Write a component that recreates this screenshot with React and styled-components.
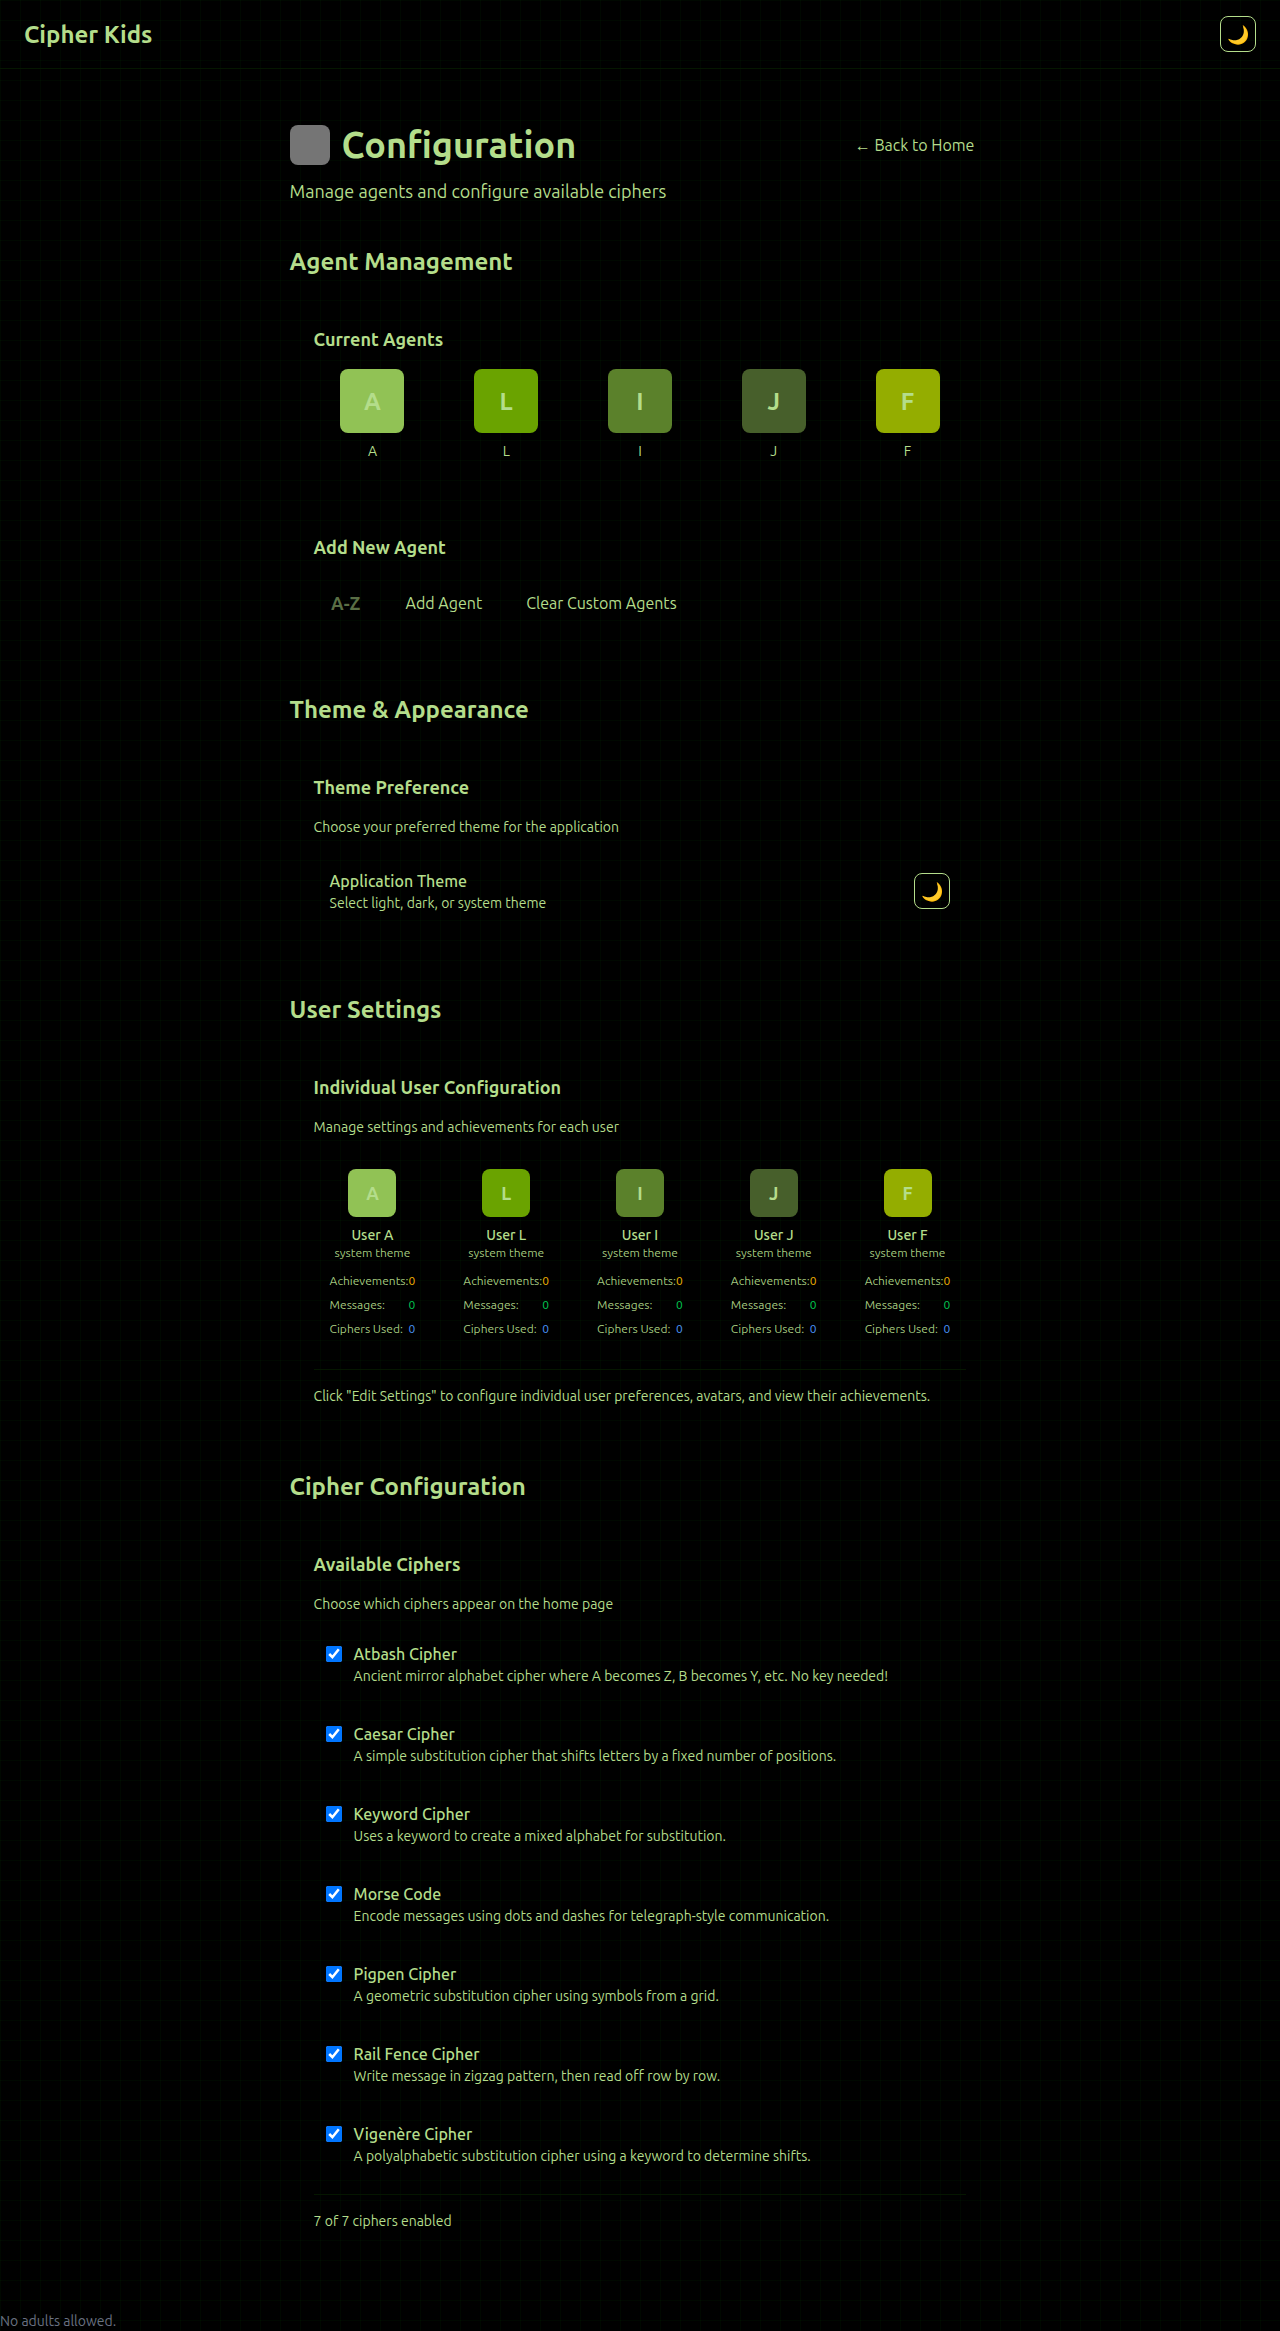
import React from "react";
import styled, { createGlobalStyle } from "styled-components";

const ink = "#b4dd8b";
const soft = "rgba(180, 221, 139, 0.92)";
const rule = "#051600";
const family = `Ubuntu, "Noto Sans", sans-serif`;

const Global = createGlobalStyle`
  *, *::before, *::after { box-sizing: border-box; }
  body {
    margin: 0;
    color: ${ink};
    font-family: ${family};
    font-size: 16px;
    line-height: 24px;
    background-color: #000;
    background-image:
      linear-gradient(rgba(0, 255, 0, 0.03) 1px, transparent 1px),
      linear-gradient(90deg, rgba(0, 255, 0, 0.03) 1px, transparent 1px);
    background-size: 20px 20px;
  }
  h1, h2, h3, p { margin: 0; }
`;

const Page = styled.div`
  min-height: 2331px;
  display: flex;
  flex-direction: column;
`;

const Header = styled.header`
  height: 69px;
  padding: 0 24px;
  display: flex;
  align-items: center;
  justify-content: space-between;
  border-bottom: 1px solid ${rule};
`;

const Brand = styled.div`
  margin-top: 1px;
  font-size: 24px;
  line-height: 33px;
  font-weight: 700;
`;

const ThemeButton = styled.button`
  width: 36px;
  height: 36px;
  padding: 0;
  display: flex;
  align-items: center;
  justify-content: center;
  border: 1px solid ${ink};
  border-radius: 8px;
  background: transparent;
  font-family: inherit;
  font-size: 18px;
  line-height: 28px;
`;

const Main = styled.main`
  width: 700.8px;
  margin: 56px auto 0;
  flex: 1;
`;

const TitleRow = styled.div`
  display: flex;
  align-items: center;
  justify-content: space-between;
  height: 40px;
  padding-right: 16px;
`;

const Title = styled.h1`
  display: flex;
  align-items: center;
  gap: 12px;
  font-size: 36px;
  line-height: 40px;
  font-weight: 700;
`;

const TitleIcon = styled.span`
  width: 40px;
  height: 40px;
  border-radius: 8px;
  background: #757575;
`;

const BackLink = styled.a`
  color: ${ink};
  text-decoration: none;
`;

const Subtitle = styled.p`
  margin-top: 12px;
  font-size: 18px;
  line-height: 28px;
`;

const Section = styled.section`
  margin-top: 40px;
`;

const SectionTitle = styled.h2`
  margin-bottom: 23px;
  font-size: 24px;
  line-height: 33px;
  font-weight: 700;
`;

const Panel = styled.div`
  padding: 24px;

  & + & {
    margin-top: 24px;
  }
`;

const PanelTitle = styled.h3`
  font-size: 18px;
  line-height: 28px;
  font-weight: 700;
`;

const Note = styled.p`
  margin-top: ${(p) => p.$top || 0}px;
  font-size: 14px;
  line-height: 20px;
`;

const Grid = styled.div`
  margin-top: 16px;
  display: grid;
  grid-template-columns: repeat(5, minmax(0, 1fr));
  gap: 16px;
`;

const AgentCell = styled.div`
  display: flex;
  flex-direction: column;
  align-items: center;
`;

const Tile = styled.div`
  width: ${(p) => p.$size}px;
  height: ${(p) => p.$size}px;
  display: flex;
  align-items: center;
  justify-content: center;
  border-radius: 8px;
  background: ${(p) => p.$bg};
  font-size: ${(p) => p.$font}px;
  line-height: ${(p) => p.$line}px;
  font-weight: 700;
`;

const AgentName = styled.div`
  margin-top: 8px;
  font-size: 14px;
  line-height: 20px;
`;

const FormRow = styled.div`
  margin-top: 16px;
  height: 52px;
  display: flex;
  align-items: center;
  gap: 12px;
`;

const LetterInput = styled.input`
  width: 64px;
  height: 52px;
  padding: 0;
  border: 0;
  outline: 0;
  background: transparent;
  color: ${ink};
  font: 700 18px/28px ${family};
  text-align: center;

  &::placeholder {
    color: rgba(180, 221, 139, 0.5);
    opacity: 1;
  }
`;

const TextButton = styled.button`
  padding: 8px 16px;
  border: 0;
  background: transparent;
  color: ${ink};
  font: 400 16px/24px ${family};
  white-space: nowrap;
`;

const SettingRow = styled.div`
  margin-top: 16px;
  padding: 16px;
  display: flex;
  align-items: center;
  justify-content: space-between;
`;

const ItemName = styled.div`
  font-weight: 500;
`;

const UserCard = styled.div`
  padding: 16px;
  display: flex;
  flex-direction: column;
  align-items: center;
`;

const UserName = styled.div`
  margin-top: 8px;
  font-size: 14px;
  line-height: 20px;
  font-weight: 500;
`;

const UserTheme = styled.div`
  font-size: 12px;
  line-height: 16px;
  color: ${soft};
`;

const Stats = styled.div`
  align-self: stretch;
  margin-top: 12px;
  display: flex;
  flex-direction: column;
  gap: 8px;
`;

const Stat = styled.div`
  display: flex;
  justify-content: space-between;
  font-size: 12px;
  line-height: 16px;
`;

const StatLabel = styled.span`
  color: ${soft};
`;

const StatValue = styled.span`
  color: ${(p) => p.$color};
`;

const PanelFooter = styled.div`
  margin-top: 16px;
  padding-top: 16px;
  border-top: 1px solid ${rule};
`;

const CipherList = styled.div`
  margin-top: 16px;
  display: flex;
  flex-direction: column;
  gap: 12px;
`;

const CipherRow = styled.label`
  height: 68px;
  padding: 12px;
  display: flex;
  align-items: flex-start;
  gap: 12px;
`;

const Check = styled.input`
  width: 16px;
  height: 16px;
  margin: 4px 0 0;
  flex: none;
`;

const Footer = styled.footer`
  font-size: 14px;
  line-height: 20px;
  color: #6a7282;
`;

const agents = [
  ["A", "#91c255"],
  ["L", "#6aa300"],
  ["I", "#5b812b"],
  ["J", "#475f2b"],
  ["F", "#94ad00"],
];

const stats = [
  ["Achievements:", "#f0b100"],
  ["Messages:", "#00c950"],
  ["Ciphers Used:", "#4a94f8"],
];

const ciphers = [
  ["Atbash Cipher", "Ancient mirror alphabet cipher where A becomes Z, B becomes Y, etc. No key needed!"],
  ["Caesar Cipher", "A simple substitution cipher that shifts letters by a fixed number of positions."],
  ["Keyword Cipher", "Uses a keyword to create a mixed alphabet for substitution."],
  ["Morse Code", "Encode messages using dots and dashes for telegraph-style communication."],
  ["Pigpen Cipher", "A geometric substitution cipher using symbols from a grid."],
  ["Rail Fence Cipher", "Write message in zigzag pattern, then read off row by row."],
  ["Vigenère Cipher", "A polyalphabetic substitution cipher using a keyword to determine shifts."],
];

export default function App() {
  return (
    <Page>
      <Global />
      <Header>
        <Brand>Cipher Kids</Brand>
        <ThemeButton>🌙</ThemeButton>
      </Header>
      <Main>
        <TitleRow>
          <Title><TitleIcon />Configuration</Title>
          <BackLink>← Back to Home</BackLink>
        </TitleRow>
        <Subtitle>Manage agents and configure available ciphers</Subtitle>

        <Section>
          <SectionTitle>Agent Management</SectionTitle>
          <Panel>
            <PanelTitle>Current Agents</PanelTitle>
            <Grid>
              {agents.map(([name, bg]) => (
                <AgentCell key={name}>
                  <Tile $size={64} $font={24} $line={33} $bg={bg}>{name}</Tile>
                  <AgentName>{name}</AgentName>
                </AgentCell>
              ))}
            </Grid>
          </Panel>
          <Panel>
            <PanelTitle>Add New Agent</PanelTitle>
            <FormRow>
              <LetterInput placeholder="A-Z" />
              <TextButton>Add Agent</TextButton>
              <TextButton>Clear Custom Agents</TextButton>
            </FormRow>
          </Panel>
        </Section>

        <Section>
          <SectionTitle>Theme &amp; Appearance</SectionTitle>
          <Panel>
            <PanelTitle>Theme Preference</PanelTitle>
            <Note $top={16}>Choose your preferred theme for the application</Note>
            <SettingRow>
              <div>
                <ItemName>Application Theme</ItemName>
                <Note>Select light, dark, or system theme</Note>
              </div>
              <ThemeButton>🌙</ThemeButton>
            </SettingRow>
          </Panel>
        </Section>

        <Section>
          <SectionTitle>User Settings</SectionTitle>
          <Panel>
            <PanelTitle>Individual User Configuration</PanelTitle>
            <Note $top={16}>Manage settings and achievements for each user</Note>
            <Grid>
              {agents.map(([name, bg]) => (
                <UserCard key={name}>
                  <Tile $size={48} $font={18} $line={28} $bg={bg}>{name}</Tile>
                  <UserName>User {name}</UserName>
                  <UserTheme>system theme</UserTheme>
                  <Stats>
                    {stats.map(([label, color]) => (
                      <Stat key={label}>
                        <StatLabel>{label}</StatLabel>
                        <StatValue $color={color}>0</StatValue>
                      </Stat>
                    ))}
                  </Stats>
                </UserCard>
              ))}
            </Grid>
            <PanelFooter>
              <Note>Click "Edit Settings" to configure individual user preferences, avatars, and view their achievements.</Note>
            </PanelFooter>
          </Panel>
        </Section>

        <Section>
          <SectionTitle>Cipher Configuration</SectionTitle>
          <Panel>
            <PanelTitle>Available Ciphers</PanelTitle>
            <Note $top={16}>Choose which ciphers appear on the home page</Note>
            <CipherList>
              {ciphers.map(([name, text]) => (
                <CipherRow key={name}>
                  <Check type="checkbox" defaultChecked />
                  <div>
                    <ItemName>{name}</ItemName>
                    <Note>{text}</Note>
                  </div>
                </CipherRow>
              ))}
            </CipherList>
            <PanelFooter>
              <Note>7 of 7 ciphers enabled</Note>
            </PanelFooter>
          </Panel>
        </Section>
      </Main>
      <Footer>No adults allowed.</Footer>
    </Page>
  );
}
